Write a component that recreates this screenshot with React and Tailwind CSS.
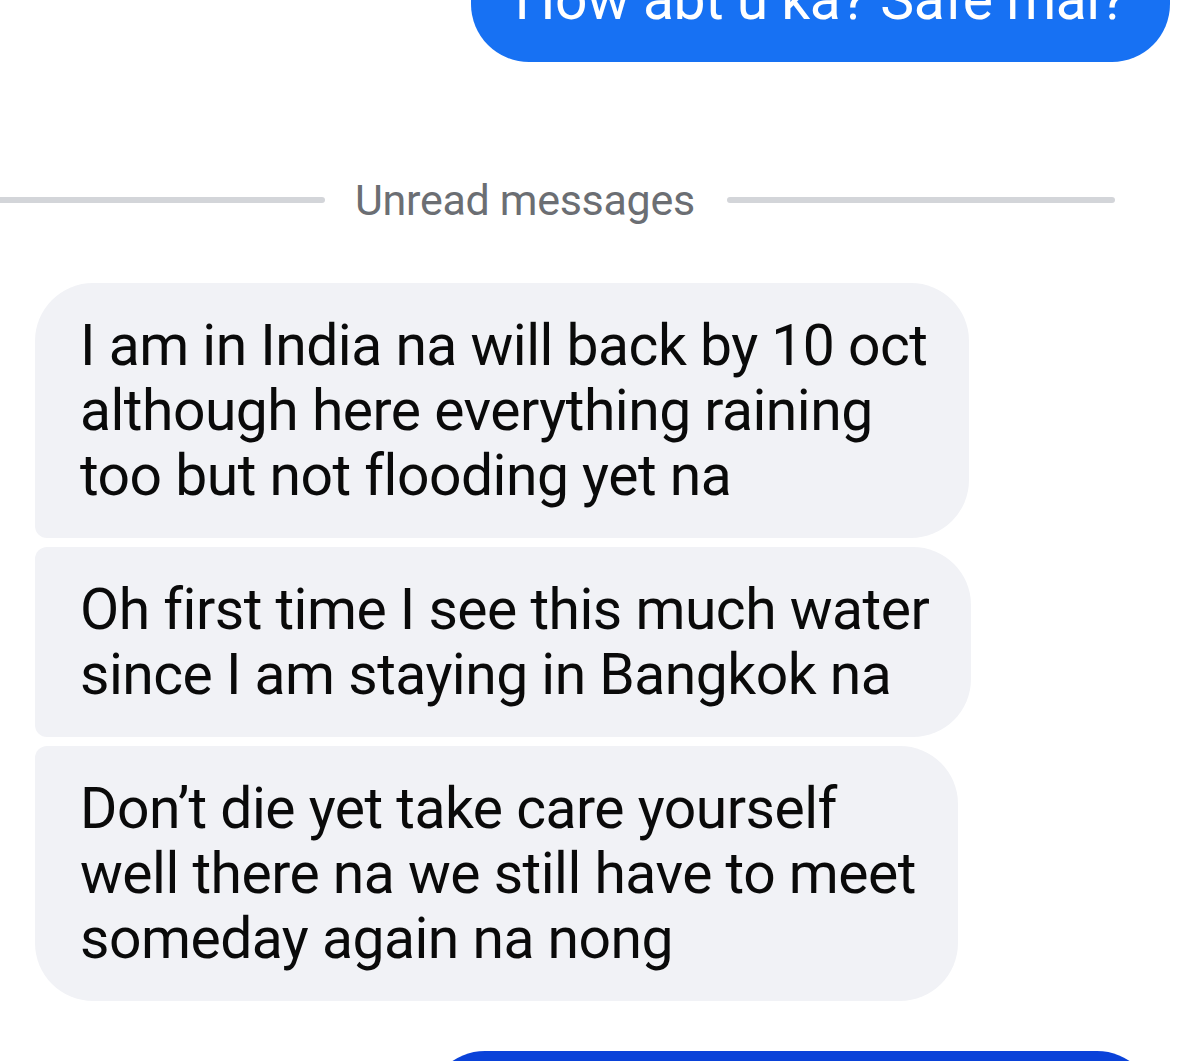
export default function App() {
  const grayLines = [
    {
      lines: ["I am in India na will back by 10 oct", "although here everything raining", "too but not flooding yet na"],
      r: "rounded-tl-[58px] rounded-tr-[58px] rounded-br-[58px] rounded-bl-[12px]",
    },
    {
      lines: ["Oh first time I see this much water", "since I am staying in Bangkok na"],
      r: "rounded-tl-[12px] rounded-tr-[58px] rounded-br-[58px] rounded-bl-[12px]",
    },
    {
      lines: ["Don\u2019t die yet take care yourself", "well there na we still have to meet", "someday again na nong"],
      r: "rounded-tl-[12px] rounded-tr-[58px] rounded-br-[58px] rounded-bl-[58px]",
    },
  ];
  return (
    <div className="w-[1200px] h-[1061px] overflow-hidden bg-white font-['Roboto',sans-serif]">
      <div className="flex justify-end pr-[30px] -mt-[63px]">
        <div className="bg-[#1771f3] text-white rounded-[58px] pl-[44px] pr-[44px] py-[30px] text-[57px] tracking-[-0.5px] leading-[65px] whitespace-nowrap">
          How abt u ka? Safe mai?
        </div>
      </div>
      <div className="flex items-center mt-[108px] h-[60px]">
        <div className="w-[325px] h-[6px] bg-[#d3d5d9] rounded-r-full" />
        <div className="pl-[30px] pr-[32px] text-[43px] tracking-[-0.3px] text-[#6b6e73] leading-none">Unread messages</div>
        <div className="w-[388px] h-[6px] bg-[#d3d5d9] rounded-full" />
      </div>
      <div className="flex flex-col items-start gap-[9px] pl-[35px] mt-[53px]">
        {grayLines.map((b, i) => (
          <div key={i} className={`bg-[#f1f2f6] ${b.r} pl-[45px] pr-[42px] py-[30px] text-[57px] tracking-[-0.5px] leading-[65px] text-[#0a0a0a]`}>
            {b.lines.map((l, j) => (
              <div key={j} className="whitespace-nowrap">{l}</div>
            ))}
          </div>
        ))}
      </div>
      <div className="flex justify-end pr-[45px] mt-[50px]">
        <div className="w-[728px] h-[120px] bg-[#0a42d9] rounded-t-[58px]" />
      </div>
    </div>
  );
}
